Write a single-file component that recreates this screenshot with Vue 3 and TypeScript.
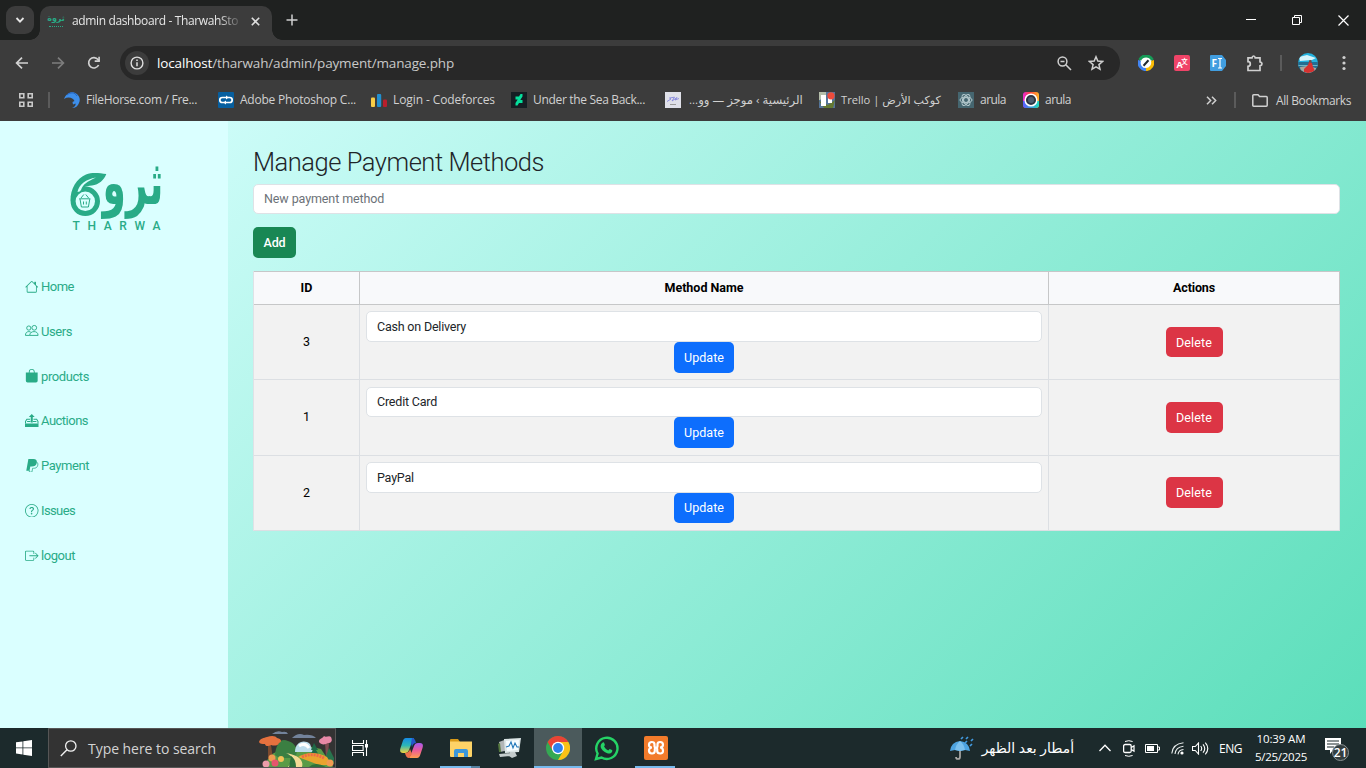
<script setup lang="ts">
import { ref } from 'vue'

interface Bookmark { id: string; label: string; slot: number; text: number; rtl?: boolean; arabic?: boolean }
interface NavItem { id: string; label: string; text: number }
interface Method { id: number; name: string }

const bookmarks: Bookmark[] = [
  { id: 'horse', label: 'FileHorse.com / Fre...', slot: 154, text: 111 },
  { id: 'adobe', label: 'Adobe Photoshop C...', slot: 153, text: 116 },
  { id: 'cf', label: 'Login - Codeforces', slot: 140, text: 102 },
  { id: 'deviant', label: 'Under the Sea Back...', slot: 154, text: 112 },
  { id: 'mail', label: 'الرئيسية › موجز — وو...', slot: 154, text: 114, rtl: true, arabic: true },
  { id: 'trello', label: 'Trello | كوكب الأرض', slot: 139, text: 100, arabic: true },
  { id: 'gpt', label: 'arula', slot: 65, text: 26 },
  { id: 'ring', label: 'arula', slot: 65, text: 26 },
]

const nav: NavItem[] = [
  { id: 'home', label: 'Home', text: 33 },
  { id: 'users', label: 'Users', text: 31 },
  { id: 'bag', label: 'products', text: 48 },
  { id: 'auction', label: 'Auctions', text: 47 },
  { id: 'paypal', label: 'Payment', text: 48 },
  { id: 'question', label: 'Issues', text: 34 },
  { id: 'logout', label: 'logout', text: 34 },
]

const methods = ref<Method[]>([
  { id: 3, name: 'Cash on Delivery' },
  { id: 1, name: 'Credit Card' },
  { id: 2, name: 'PayPal' },
])
const newMethod = ref('')

/* Sets a label to a given width: by tracking, or by type size for joined scripts. */
const vFit = {
  mounted(el: HTMLElement, binding: { value: number; arg?: string }) {
    const width = el.getBoundingClientRect().width
    if (binding.arg === 'size') {
      const size = parseFloat(getComputedStyle(el).fontSize)
      el.style.fontSize = `${(size * binding.value) / width}px`
    } else {
      const count = (el.textContent ?? '').length
      el.style.letterSpacing = `${(binding.value - width) / count}px`
    }
  },
}
</script>

<template>
  <div class="screen">
    <header class="browser">
      <div class="tabs">
        <button class="tab-search"><svg width="10" height="10" viewBox="0 0 10 10"><path d="M1.5 3l3.5 3.6L8.500 3" fill="none" stroke="#e6e6e6" stroke-width="1.8" /></svg></button>
        <div class="tab">
          <span class="fav"><b>ثروة</b><i></i></span>
          <span class="tab-title"><span v-fit="166">admin dashboard - TharwahSto</span></span>
          <svg class="close" width="9" height="9" viewBox="0 0 9 9"><path d="M.8.8l7.400 7.400M8.200.8L.8 8.200" stroke="#dedede" stroke-width="1.6" /></svg>
        </div>
        <svg class="plus" width="12" height="12" viewBox="0 0 12 12"><path d="M6 .5v11M.5 6h11" stroke="#d0d0d0" stroke-width="1.500" /></svg>
        <div class="win">
          <svg width="10" height="10" viewBox="0 0 10 10"><path d="M0 4.500h10" stroke="#fff" /></svg>
          <svg width="10" height="10" viewBox="0 0 10 10"><path d="M.5 2.500h7v7h-7zM2.500 2.500v-2h7v7h-2" fill="none" stroke="#fff" /></svg>
          <svg width="11" height="11" viewBox="0 0 11 11"><path d="M.5.5l10 10M10.500.5l-10 10" stroke="#fff" stroke-width="1.200" /></svg>
        </div>
      </div>

      <div class="toolbar">
        <svg class="t-ico" width="16" height="16" viewBox="0 0 16 16"><path d="M14 8H3M8 2.600L2.600 8 8 13.400" fill="none" stroke="#d2d2d2" stroke-width="1.700" /></svg>
        <svg class="t-ico" width="16" height="16" viewBox="0 0 16 16"><path d="M2 8h11M8 2.600L13.400 8 8 13.400" fill="none" stroke="#7d7d7d" stroke-width="1.700" /></svg>
        <svg class="t-ico" width="16" height="16" viewBox="0 0 16 16"><path d="M12.600 10A5.200 5.200 0 1 1 12 4.600L13.300 6" fill="none" stroke="#d2d2d2" stroke-width="1.700" /><path d="M13.900 1.700v5.200H8.700V5.300h3.600V1.700z" fill="#d2d2d2" /></svg>
        <div class="omni">
          <span class="info"><svg width="14" height="14" viewBox="0 0 14 14"><circle cx="7" cy="7" r="5.900" fill="none" stroke="#dedede" stroke-width="1.400" /><path d="M7 6.200v4M7 3.600v1.500" stroke="#dedede" stroke-width="1.500" /></svg></span>
          <span class="url" v-fit="297"><em>localhost</em>/tharwah/admin/payment/manage.php</span>
          <svg class="lens" width="15" height="15" viewBox="0 0 15 15"><circle cx="5.500" cy="5.500" r="4.400" fill="none" stroke="#cfcfcf" stroke-width="1.500" /><path d="M3.500 5.500h4M8.800 8.800l5.200 5.200" stroke="#cfcfcf" stroke-width="1.600" /></svg>
          <svg width="16" height="16" viewBox="0 0 16 16"><path d="M8 1.800l1.800 4.300 4.700.4-3.600 3.100 1.100 4.600L8 11.800l-4 2.400 1.100-4.600L1.500 6.500l4.700-.4z" fill="none" stroke="#cfcfcf" stroke-width="1.500" /></svg>
        </div>
        <div class="exts">
          <svg width="16" height="16" viewBox="0 0 16 16"><circle cx="8" cy="8" r="6.400" fill="#fff" /><path d="M1.700 5A7 7 0 0 1 14.400 5" fill="none" stroke="#169b57" stroke-width="3" /><path d="M14.400 5.500A7 7 0 0 1 8 14.600" fill="none" stroke="#fbbc05" stroke-width="3" /><path d="M8 14.600A6.700 6.700 0 0 1 1.600 5.500" fill="none" stroke="#4285f4" stroke-width="3" /><path d="M5.500 10.700L10.500 5.300" stroke="#202830" stroke-width="2" /></svg>
          <svg class="e2" width="16" height="16" viewBox="0 0 16 16"><rect width="16" height="16" rx="2" fill="#f04468" /><text x="2.400" y="13" font-size="9" font-weight="700" fill="#fff">A</text><text x="7.300" y="8.500" font-size="6.500" font-weight="700" fill="#fff">文</text></svg>
          <svg class="e2" width="16" height="16" viewBox="0 0 16 16"><path d="M1 0h11l4 5v6l-4 5H1a1 1 0 0 1-1-1V1a1 1 0 0 1 1-1z" fill="#419ee0" /><text x="1.500" y="12" font-size="10" font-weight="700" fill="#fff">F</text><path d="M8 3.500h4M8 13h4M10 3.500V13" stroke="#fff" stroke-width="1.200" /></svg>
          <svg class="e3" width="18" height="17" viewBox="0 0 18 17"><path d="M2 2.800h4q.3-1.800 1.600-1.800t1.600 1.800H14v4q2 .3 2 2t-2 2v4.700H2v-4.200a2.300 2.300 0 0 0 0-4.600z" fill="none" stroke="#d0d0d0" stroke-width="1.700" /></svg>
          <i class="bar e4"></i>
          <svg class="avatar" width="20" height="20" viewBox="0 0 20 20"><defs><clipPath id="av"><circle cx="10" cy="10" r="10" /></clipPath></defs><g clip-path="url(#av)"><path fill="#23b2df" d="M0 0h20v20H0z" /><path d="M1 4l8-2 9 3-4 2-12 1z" fill="#d6f3fb" /><path fill="#246d91" d="M0 9h20v11H0z" /><path d="M0 12h20v1H0z" fill="#6fb4c4" /><path d="M2 14l7-1 9 2v5H3z" fill="#a8a69d" /><path d="M6 16l4-4 1-3 3 1 1 4 2 4-6 3-5-2z" fill="#d63230" /><circle cx="12.300" cy="8.300" r="1.300" fill="#764b42" /></g></svg>
          <svg class="e5" width="4" height="16" viewBox="0 0 4 16" fill="#cfcfcf"><circle cx="2" cy="2.500" r="1.600" /><circle cx="2" cy="8" r="1.600" /><circle cx="2" cy="13.500" r="1.600" /></svg>
        </div>
      </div>

      <div class="marks">
        <svg class="apps" width="14" height="14" viewBox="0 0 14 14"><path d="M.8.8h4v4h-4zM9.200.8h4v4h-4zM.8 9.200h4v4h-4zM9.200 9.200h4v4h-4z" fill="none" stroke="#c9c9c9" stroke-width="1.600" /></svg>
        <i class="bar"></i>
        <div class="mark-list">
          <div v-for="(b, i) in bookmarks" :key="i" class="mark" :style="{ width: b.slot + 'px' }">
            <svg width="16" height="16" viewBox="0 0 16 16">
              <g v-if="b.id === 'horse'"><path d="M0 7C2 2 6-.5 10 .5c5 1.500 7 6.500 5 10.500-1 3-3.500 5-7 5 3-1 4-3 3.500-4.500L9 12.500 8.500 10l2-1C9 5.500 4 4.500 0 7z" fill="#3d8eea" /><path d="M3 3c3-3 8-3 10 1" stroke="#2563bd" fill="none" /></g>
              <g v-else-if="b.id === 'adobe'"><rect width="16" height="16" rx="1" fill="#075f9f" /><path d="M8.500 5.500H4.300Q1.800 5.500 1.800 8t2.500 2.500H6M7.500 10.500h4.200q2.500 0 2.500-2.500t-2.500-2.500H10" fill="none" stroke="#fff" stroke-width="1.700" /><path d="M8 3.500l3 2-3 2zM8 8.500l-3 2 3 2z" fill="#fff" /></g>
              <g v-else-if="b.id === 'cf'"><rect x="0" y="5.500" width="4" height="9.500" rx="1" fill="#f8cc46" /><rect x="6" y="2" width="4.200" height="13" rx="1" fill="#218fd0" /><rect x="12" y="7.500" width="4" height="7.500" rx="1" fill="#b71e2c" /></g>
              <g v-else-if="b.id === 'deviant'"><path fill="#151e24" d="M0 0h16v16H0z" /><path d="M11.500 2v2.500L9.300 8h2.200v3H8l-1.500 2.500H4.500V11l2.200-3.500H4.500v-3H8L9.500 2z" fill="#05df9c" /></g>
              <g v-else-if="b.id === 'mail'"><path fill="#dfe0e9" d="M0 0h16v16H0z" /><path d="M2 9.500l4-2.500-1.500-1 5-.8L7 9l5-3.500L10 8l4-1.500" fill="none" stroke="#8586dc" stroke-width=".9" /><path d="M5 12.500h6" stroke="#999" /></g>
              <g v-else-if="b.id === 'trello'"><path fill="#55749a" d="M0 0h16v16H0z" /><path d="M0 0h7v3L1 8H0z" fill="#b5beaa" /><path d="M0 9l5 7h9l2-8-7 5z" fill="#637832" /><path fill="#fff" d="M2 3h5v11H2zM9 6h4v5H9z" /><circle cx="12" cy="3.800" r="3.600" fill="#ee4b3b" /></g>
              <g v-else-if="b.id === 'gpt'"><path fill="#456670" d="M0 0h16v16H0z" /><g fill="none" stroke="#b7cbcf" stroke-width="1"><ellipse cx="8" cy="8" rx="6" ry="3" /><ellipse cx="8" cy="8" rx="6" ry="3" transform="rotate(60 8 8)" /><ellipse cx="8" cy="8" rx="6" ry="3" transform="rotate(120 8 8)" /><circle cx="8" cy="8" r="2.500" /></g></g>
              <g v-else><defs><linearGradient id="rb" x2="1" y2="0"><stop stop-color="#e927d7" /><stop offset=".45" stop-color="#ff4338" /><stop offset="1" stop-color="#ffb52b" /></linearGradient><linearGradient id="rb2" x2="1" y2="0"><stop stop-color="#5a5cff" /><stop offset="1" stop-color="#20d9bd" /></linearGradient></defs><rect width="16" height="16" rx="3" fill="url(#rb)" /><path d="M0 9h16v4q0 3-3 3H3q-3 0-3-3z" fill="url(#rb2)" /><circle cx="8" cy="8" r="5.800" fill="#2c3442" stroke="#fff" stroke-width="1.500" /><circle cx="8" cy="8" r="3" fill="#4d5d70" /></g>
            </svg>
            <span v-if="b.arabic" v-fit:size="b.text" :dir="b.rtl ? 'rtl' : 'ltr'" :class="{ pad: b.rtl }">{{ b.label }}</span>
            <span v-else v-fit="b.text">{{ b.label }}</span>
          </div>
        </div>
        <svg class="more" width="11" height="9" viewBox="0 0 11 9"><path d="M1 .7l3.700 3.800L1 8.300M6 .7l3.700 3.800L6 8.300" fill="none" stroke="#d0d0d0" stroke-width="1.500" /></svg>
        <i class="bar"></i>
        <svg class="folder" width="16" height="13" viewBox="0 0 16 13"><path d="M.8 11.300V1.700q0-.9.900-.9H6l1.600 1.800h6.700q.9 0 .9.900v7.800q0 .9-.9.9H1.700q-.9 0-.9-.9z" fill="none" stroke="#d0d0d0" stroke-width="1.500" /></svg>
        <span class="all" v-fit="75">All Bookmarks</span>
      </div>
    </header>

    <div class="page">
      <aside class="side">
        <svg class="logo" width="100" height="70" viewBox="0 0 100 70">
          <circle cx="19.300" cy="36.300" r="12.200" fill="none" stroke="#29ab87" stroke-width="5" />
          <path d="M4.600 36C4 24 11 13 20 9.500 27 7 34 8.500 40.300 9 38 15 33 19.500 26 20.500 19 21 15 23 13 27l-5 5z" fill="#29ab87" />
          <path d="M11.500 27C13 19 20 14.500 30 12.500 21 17 17 19 15 25q-1 2-3.500 2z" fill="#daffff" />
          <path d="M13.200 33.800h11.200M14 34l1.400 8h7l1.400-8M15 33l2.800-3.500M22.600 33l-2.800-3.500M17.500 36.500v3M20.300 36.500v3" fill="none" stroke="#29ab87" stroke-width="1" />
          <g transform="translate(0 38.500) scale(1 1.500)"><text class="logo-ar" x="97.500" y="0" textLength="61" lengthAdjust="spacingAndGlyphs">ثرو</text></g>
          <text class="logo-en" x="6.500" y="64.500" textLength="88">THARWA</text>
        </svg>
        <nav>
          <a v-for="n in nav" :key="n.id" class="link">
            <svg width="13.500" height="13.500" viewBox="0 0 16 16" fill="currentColor">
              <path v-if="n.id === 'home'" d="M8.707 1.500a1 1 0 0 0-1.414 0L.646 8.146a.5.5 0 0 0 .708.708L2 8.207V13.500A1.500 1.500 0 0 0 3.500 15h9a1.500 1.500 0 0 0 1.500-1.500V8.207l.646.647a.5.5 0 0 0 .708-.708L13 5.793V2.500a.5.5 0 0 0-.5-.5h-1a.5.5 0 0 0-.5.5v1.293zM13 7.207V13.500a.5.5 0 0 1-.5.5h-9a.5.5 0 0 1-.5-.5V7.207l5-5z" />
              <g v-else-if="n.id === 'users'" fill="none" stroke="currentColor" stroke-width="1.100"><circle cx="4.500" cy="4.800" r="2.500" /><circle cx="11" cy="4.500" r="2.800" /><path d="M5.500 13.500C5.800 10.500 8 9 10.700 9s4.800 1.500 4.800 4.500zM5.500 13.500h-5c0-2.800 1.500-4.500 4-4.500 1 0 1.800.3 2.400.8" /></g>
              <path v-else-if="n.id === 'bag'" d="M8 1a2.500 2.500 0 0 1 2.500 2.500V4h-5v-.5A2.500 2.500 0 0 1 8 1m3.500 3v-.5a3.500 3.500 0 1 0-7 0V4H1v10a2 2 0 0 0 2 2h10a2 2 0 0 0 2-2V4z" />
              <g v-else-if="n.id === 'auction'"><path d="M8 0l3.500 3.500H9.200V10H6.800V3.500H4.500zM0 11.300h16v4.200H0z" /><path d="M6 6.300H2.200L.6 8.800v2.500M10 6.300h3.800l1.600 2.500v2.500M2.500 9h4M9.500 9h4" fill="none" stroke="currentColor" stroke-width="1.200" /></g>
              <g v-else-if="n.id === 'paypal'"><path d="M4 0h6c3 0 4.600 1.700 4 4.500C13.500 8 11 9 8 9H6.300L5.300 14H1.500z" /><path d="M14.200 3.800c1.400 1.200 1.300 3 .6 4.700-.8 1.900-2.500 2.500-4.600 2.500H9l-.8 4.500H5l.4-2" fill="none" stroke="currentColor" stroke-width=".9" /></g>
              <g v-else-if="n.id === 'question'"><path d="M8 15A7 7 0 1 1 8 1a7 7 0 0 1 0 14m0 1A8 8 0 1 0 8 0a8 8 0 0 0 0 16" /><path d="M5.255 5.786a.237.237 0 0 0 .241.247h.825c.138 0 .248-.113.266-.25.09-.656.54-1.134 1.342-1.134.686 0 1.314.343 1.314 1.168 0 .635-.374.927-.965 1.371-.673.489-1.206 1.060-1.168 1.987l.003.217a.25.25 0 0 0 .25.246h.811a.25.25 0 0 0 .25-.25v-.105c0-.718.273-.927 1.010-1.486.609-.463 1.244-.977 1.244-2.056 0-1.511-1.276-2.241-2.673-2.241-1.267 0-2.655.590-2.750 2.286m1.557 5.763c0 .533.425.927 1.010.927.609 0 1.028-.394 1.028-.927 0-.552-.420-.940-1.029-.940-.584 0-1.009.388-1.009.940" /></g>
              <g v-else><path fill-rule="evenodd" d="M10 12.500a.5.5 0 0 1-.5.5h-8a.5.5 0 0 1-.5-.5v-9a.5.5 0 0 1 .5-.5h8a.5.5 0 0 1 .5.5v2a.5.5 0 0 0 1 0v-2A1.500 1.500 0 0 0 9.500 2h-8A1.500 1.500 0 0 0 0 3.500v9A1.500 1.500 0 0 0 1.500 14h8a1.500 1.500 0 0 0 1.500-1.500v-2a.5.5 0 0 0-1 0z" /><path fill-rule="evenodd" d="M15.854 8.354a.5.5 0 0 0 0-.708l-3-3a.5.5 0 0 0-.708.708L14.293 7.500H5.500a.5.5 0 0 0 0 1h8.793l-2.147 2.146a.5.5 0 0 0 .708.708z" /></g>
            </svg>
            <span v-fit="n.text">{{ n.label }}</span>
          </a>
        </nav>
      </aside>

      <main class="main">
        <h1><span v-fit="291">Manage Payment Methods</span></h1>
        <input v-model="newMethod" class="field new" placeholder="New payment method" />
        <button class="btn add"><span v-fit="22">Add</span></button>
        <div class="table">
          <div class="row head">
            <div><span v-fit="12">ID</span></div>
            <div><span v-fit="79">Method Name</span></div>
            <div><span v-fit="42">Actions</span></div>
          </div>
          <div v-for="m in methods" :key="m.id" class="row body">
            <div class="id">{{ m.id }}</div>
            <div class="edit">
              <input v-model="m.name" class="field" />
              <button class="btn update"><span v-fit="40">Update</span></button>
            </div>
            <div class="act"><button class="btn delete"><span v-fit="36">Delete</span></button></div>
          </div>
        </div>
      </main>
    </div>

    <footer class="taskbar">
      <div class="start"><svg width="16" height="16" viewBox="0 0 16 16"><path d="M0 2.300l6.500-.9v6.100H0zM7.300 1.300L16 0v7.500H7.300zM0 8.300h6.500v6.200L0 13.600zM7.300 8.300H16V16l-8.700-1.300z" fill="#fff" /></svg></div>
      <div class="search">
        <svg width="17" height="17" viewBox="0 0 17 17"><circle cx="10.800" cy="6" r="5.200" fill="none" stroke="#f1f1f1" stroke-width="1.300" /><path d="M7 9.800L.8 16" stroke="#f1f1f1" stroke-width="1.400" /></svg>
        <span v-fit="128">Type here to search</span>
        <svg class="scene" width="76" height="38" viewBox="0 0 76 38">
          <path d="M13 5q5-4 10-2 5-1 6 2H12zM33 9q6-6 12-3 8-1 12 3H33z" fill="#73839b" />
          <path d="M6 38c2-10 7-14 14-16l24-6 18 4 12 18z" fill="#5a9b47" />
          <path d="M16 26c1-10 5-18 13-14 8 2 11 10 7 17H20z" fill="#3b7f42" />
          <path d="M36 23c0-10 9-13 15-8l3 8z" fill="#bcdcec" /><path d="M40 17q6-4 10 2" stroke="#fff" stroke-width="3" fill="none" />
          <path d="M9 16h3l2 14H9z" fill="#7c4a2f" /><path d="M0 13c1-4 5-4 8-5 5-2 9-1 10 1 5 1 5 4 2 5-1 3-5 3-8 2-3 2-6 1-6-1-3 0-5 0-6-2z" fill="#e6713e" />
          <path d="M66 14l1 14h2l1-14z" fill="#7c4a50" /><path d="M60 13c0-4 3-3 5-6 2 2 5-1 7 1 2 4 0 6-3 6-3 2-7 2-9-1z" fill="#e889a7" />
          <path d="M55 14l4 7h-2l4 7H50l4-7h-2z" fill="#1f6847" /><path d="M70 19l5 10v6H64z" fill="#28734d" />
          <path d="M29 38c5-7 8-9-2-14 12 2 18 7 16 14z" fill="#f4da96" />
          <path d="M39 28q14-8 29 0l5 8-13 0z" fill="#e9a42f" /><path d="M43 28q10-5 22 1" fill="none" stroke="#ef6848" stroke-width="3" stroke-dasharray="2 1" />
          <path d="M30 38l2-11q5 3 5 11zM50 38q6-6 17 0z" fill="#2f713b" />
          <circle cx="7" cy="35" r="3.500" fill="#ec9ca9" /><circle cx="13" cy="29" r="3.500" fill="#f09a50" /><circle cx="16" cy="34" r="3.500" fill="#e6556e" /><circle cx="22" cy="30" r="3" fill="#f5c057" /><circle cx="71" cy="34" r="3.500" fill="#f09a50" />
        </svg>
      </div>
      <div class="task view"><svg width="17" height="16" viewBox="0 0 17 16"><path d="M.5 0v3.500h11V0M.5 16v-3.500h11V16M.5 5.500h10.600v5H.5zM14.500 0v16" fill="none" stroke="#fff" stroke-width="1.100" /><path d="M13 4h3v3.500h-3z" fill="#fff" /></svg></div>
      <div class="task"><svg width="23" height="22" viewBox="0 0 23 22"><defs><linearGradient id="c1" y2="1" x2="0"><stop stop-color="#168be5" /><stop offset=".5" stop-color="#2db7b6" /><stop offset="1" stop-color="#f3d43e" /></linearGradient><linearGradient id="c2" y2="1" x2="0"><stop stop-color="#a65af2" /><stop offset=".5" stop-color="#ed5d98" /><stop offset="1" stop-color="#ff9d4d" /></linearGradient></defs><path d="M6 1h8l-2 4-3 8q-1 3-4 3H3q-4 0-2.500-5l2-6Q3.500 1 6 1z" fill="url(#c1)" /><path d="M17 21H9l2-4 3-8q1-3 4-3h2q4 0 2.500 5l-2 6Q19.500 21 17 21z" fill="url(#c2)" /><path d="M12 1q3 0 4 5-3 0-4 4l-1-4z" fill="#2557c9" /><path d="M5 16q4 0 5-4l2 5-3 4q-3 0-4-5z" fill="#ee704b" /></svg></div>
      <div class="task open split"><svg width="22" height="19" viewBox="0 0 22 19"><path d="M0 1q0-1 1-1h7l2 3H0z" fill="#d99a18" /><path d="M0 2.500h22V17q0 1-1 1H1q-1 0-1-1z" fill="#fdd367" /><path d="M4 18v-6q0-2 2-2h10q2 0 2 2v6h-4v-4H8v4z" fill="#3b97da" /></svg></div>
      <div class="task"><svg width="24" height="22" viewBox="0 0 24 22"><path d="M1 5l8-3 2 11-9 2z" fill="#b1b6b7" /><path d="M0 7l2-1 1 9H1z" fill="#55783e" /><path d="M6 2l17-1-2 14-14 1z" fill="#dde6e7" /><path d="M8 4l13-1-1 10-11 1z" fill="#f6fcff" /><path d="M8 10l3-1 2-4 2 6 2-5 2 4h2" fill="none" stroke="#2076b9" stroke-width="1.100" /><path d="M12 15h5l2 4-5 2-3-2zM1 17l11-1 1 3-11 1z" fill="#c4cccd" /></svg></div>
      <div class="task open active"><svg width="24" height="24" viewBox="0 0 24 24"><circle cx="12" cy="12" r="12" fill="#35a853" /><path d="M1.600 6A12 12 0 0 1 22.400 6H12z" fill="#ea4335" /><path d="M1.600 6L7 15l5-9z" fill="#ea4335" /><path d="M22.400 6A12 12 0 0 1 12 24l5.200-9L12 6z" fill="#fbc116" /><circle cx="12" cy="12" r="6.200" fill="#fff" /><circle cx="12" cy="12" r="4.900" fill="#2f80ed" /></svg></div>
      <div class="task"><svg width="25" height="25" viewBox="0 0 25 25"><path d="M2 23l1.600-5.500A10.600 10.600 0 1 1 7.500 21.500z" fill="none" stroke="#25d366" stroke-width="2.400" /><path d="M8.800 6.500c1-.5 1.300 0 2 2 .4 1-.8 1.500-.7 2 1 2 2.500 3.200 4.200 3.900.7-.3 1-1.400 1.600-1.300 2.800 1.200 2.500 1.300 2.300 2.400-.5 1.800-2.700 2.500-5 1.700-3.700-1.300-6-4.200-6.500-6-.5-2.200.8-4 2.100-4.700z" fill="#25d366" /></svg></div>
      <div class="task open xampp"><svg width="24" height="24" viewBox="0 0 24 24"><rect width="24" height="24" rx="2" fill="#f27b2b" /><path d="M10.500 8.500q0-2.500-2.700-2.500T5 8.700t3 2.800q-3 .2-3 3T7.800 17.500t3-2.500V13q0-1.300 1.200-1.300t1.200 1.300v2q0 2.500 3 2.500t2.800-3-3-3q3-.2 3-2.800T16.200 6t-2.700 2.500v1.700q0 1.300-1.500 1.300t-1.500-1.300z" fill="none" stroke="#fff" stroke-width="2.200" /></svg></div>
      <div class="tray">
        <svg class="umb" width="24" height="25" viewBox="0 0 24 25"><path d="M10 6v15q0 2-2 2t-2-2" fill="none" stroke="#aaa9a7" stroke-width="1.700" /><path d="M0 15Q1 6 10 5q9 1 10 10l-5-1-5 1-5-1z" fill="#4da3e0" /><path d="M5 14Q6 8 10 5q4 3 5 9l-5 1z" fill="#7bc0ee" /><path d="M13 1l-2 2M18 1l-2 2M23 3l-2 2M17 5l-2 2M22 8l-2 2" stroke="#429be1" stroke-width="1.700" /></svg>
        <span class="weather" dir="rtl" v-fit:size="92.500">أمطار بعد الظهر</span>
        <svg class="up" width="12" height="8" viewBox="0 0 12 8"><path d="M.5 7L6 1.200 11.500 7" fill="none" stroke="#fff" stroke-width="1.300" /></svg>
        <svg class="cam" width="12" height="17" viewBox="0 0 12 17"><path d="M2 1.500q3.800-1.600 7.600 0M2 15.500q3.800 1.600 7.600 0" fill="none" stroke="#fff" /><rect x=".6" y="4.500" width="7.600" height="8" rx="1.500" fill="none" stroke="#fff" stroke-width="1.300" /><path d="M8.200 7.500l2.800-1.600v5.200L8.200 9.500" fill="none" stroke="#fff" stroke-width="1.200" /></svg>
        <svg class="bat" width="15" height="9" viewBox="0 0 15 9"><path d="M.5.500h12v8H.5zM13 3h1.500v3H13" fill="none" stroke="#fff" /><path d="M2 2h7v5H2z" fill="#fff" /></svg>
        <svg class="wifi" width="13" height="13" viewBox="0 0 13 13"><path d="M.8 11.500Q1.500 2 12.500.8M4 12Q4.500 5.200 12.500 4.200M7 12.400Q7.500 8 12.500 7.500" fill="none" stroke="#e9eeee" stroke-width="1.100" /><circle cx="11" cy="11" r="1.600" fill="#fff" /></svg>
        <svg class="vol" width="17" height="13" viewBox="0 0 17 13"><path d="M.5 4.500h2.800L6.500 1v11L3.300 8.500H.5zM8.700 4q2 2.500 0 5M11 2.300q3.500 4.200 0 8.400M13.300.7q5 5.800 0 11.600" fill="none" stroke="#fff" stroke-width="1.100" /></svg>
        <span class="lang" v-fit="23">ENG</span>
        <div class="clock"><span v-fit="49">10:39 AM</span><span v-fit="52">5/25/2025</span></div>
        <svg class="note" width="26" height="25" viewBox="0 0 26 25"><path d="M0 2h16v12H8l-3 4v-4H0z" fill="#fff" /><path d="M2 5h12M2 8h12M2 11h7" stroke="#1b292b" stroke-width="1.100" /><circle cx="15.500" cy="16.500" r="8" fill="#343e40" stroke="#899092" /><text x="15.500" y="20.900" text-anchor="middle" font-size="12" font-weight="600" fill="#fff">21</text></svg>
      </div>
    </footer>
  </div>
</template>

<style>
body { margin: 0; overflow: hidden; }
</style>

<style scoped>
* { box-sizing: border-box; }
.screen { width: 1366px; height: 768px; display: flex; flex-direction: column; overflow: hidden; font-family: "Open Sans", "Noto Sans", "DejaVu Sans", sans-serif; }
svg { display: block; flex: none; }
svg text { font-family: "Open Sans", "Noto Sans CJK SC", sans-serif; }
button { font: inherit; }
span { white-space: nowrap; }
.bar { flex: none; width: 2px; height: 16px; background: #5b5b5b; }

.browser { flex: none; height: 121px; background: #3c3c3c; }
.tabs { display: flex; height: 40px; background: #1f2120; }
.tab-search { flex: none; width: 28px; height: 28px; margin: 6px 12px 0 6px; border: 0; border-radius: 9px; background: #3c3c3c; display: grid; place-items: center; padding: 0; }
.tab { position: relative; width: 232px; height: 34px; margin: 6px 0 0 -6px; padding: 0 11px 4px 8px; background: #3c3c3c; border-radius: 10px 10px 0 0; display: flex; align-items: center; }
.tab::before, .tab::after { content: ""; position: absolute; bottom: 0; width: 10px; height: 10px; }
.tab::before { left: -10px; background: radial-gradient(circle at 0 0, transparent 9.500px, #3c3c3c 10px); }
.tab::after { right: -10px; background: radial-gradient(circle at 100% 0, #1f2120 9.500px, #3c3c3c 10px); }
.fav { width: 16px; height: 16px; margin-right: 8px; display: flex; flex-direction: column; align-items: center; color: #29a985; }
.fav b { font: 700 8px/12px "DejaVu Sans", sans-serif; }
.fav i { width: 14px; border-top: 1px dotted #29a985; margin-top: 1px; }
.tab-title { width: 170px; font-size: 12px; line-height: 16px; color: #e6e6e6; -webkit-mask-image: linear-gradient(90deg, #000 146px, transparent 172px); mask-image: linear-gradient(90deg, #000 146px, transparent 172px); }
.tab-title span { display: inline-block; }
.close { margin-left: 9px; }
.plus { margin: 14px 0 0 14px; }
.win { margin: 15px 17px 0 auto; display: flex; gap: 36px; }

.toolbar { display: flex; align-items: center; height: 46px; padding-left: 14px; }
.t-ico { margin-right: 20px; }
.omni { width: 1000px; height: 34px; margin-left: -2px; padding: 0 16px 0 5px; border-radius: 17px; background: #282828; display: flex; align-items: center; }
.info { width: 24px; height: 24px; border-radius: 12px; background: #3c3c3c; display: grid; place-items: center; margin-right: 8px; }
.url { display: inline-block; font-size: 13.500px; line-height: 20px; color: #c9c9c9; }
.url em { font-style: normal; color: #fff; }
.lens { margin: 0 16px 0 auto; }
.exts { display: flex; align-items: center; flex: 1; padding-left: 18px; }
.e2 { margin-left: 20px; }
.e3 { margin-left: 20px; }
.e4 { margin-left: 16px; }
.avatar { margin-left: 16px; }
.e5 { margin-left: 24px; }

.marks { display: flex; align-items: center; height: 28px; font-size: 12px; color: #d1d1d1; padding: 0 15px 0 19px; }
.apps { margin-right: 15px; }
.mark-list { display: flex; margin-left: 14px; }
.mark { display: flex; align-items: center; gap: 6px; line-height: 18px; }
.mark .pad { margin-left: 2px; }
.more { margin: 0 17px 0 auto; }
.folder { margin: 0 8px 0 16px; }

.page { flex: none; height: 607px; display: flex; }
.side { flex: none; width: 228px; background: #daffff; color: #29ab87; font-family: Roboto, sans-serif; }
.logo { margin: 44px 0 0 66px; overflow: visible; }
.logo-ar { font: 700 41px "DejaVu Sans", sans-serif; fill: #29ab87; direction: rtl; }
.logo-en { font: 500 12px Roboto, sans-serif; fill: #29ab87; }
nav { margin-top: 29px; }
.link { display: flex; align-items: center; height: 44.830px; gap: 2.500px; padding-left: 25px; font-size: 13px; }

.main { flex: 1; padding: 24px 26px 0 25px; background: linear-gradient(135deg, #ccfcf8, #5bdeba); font-family: Roboto, sans-serif; color: #212529; }
h1 { margin: 0; height: 38.670px; font-size: 25.500px; font-weight: 350; line-height: 35px; }
h1 span { display: inline-block; }
.field { display: block; width: 100%; height: 30.660px; border: 1px solid #dee2e6; border-radius: 5px; padding: 0 10px; background: #fff; font: 400 12.500px Roboto, sans-serif; letter-spacing: -.2px; color: #212529; outline: none; }
.new { height: 30.300px; }
.field::placeholder { color: #6c7278; opacity: 1; letter-spacing: -.1px; }
.btn { display: grid; place-items: center; height: 30.660px; padding: 0; border: 0; border-radius: 5px; color: #fff; font-size: 12.500px; }
.add { width: 43px; margin: 13px 0 13.370px; background: #198754; font-weight: 500; }
.table { width: 1087px; font-size: 12.500px; color: #000; border-left: 1px solid #dee2e6; }
.row { display: grid; grid-template-columns: 106px 689px 291px; text-align: center; }
.row > div { border-right: 1px solid #dcdfe3; }
.head { height: 34px; background: #f8f9fb; border: solid #c6c7c8; border-width: 1px 0; font-weight: 700; line-height: 32px; }
.head > div { border-right-color: #c6c7c8; }
.body { height: 75.330px; background: #f2f2f2; border-bottom: 1px solid #dcdfe3; }
.id { line-height: 74.500px; }
.edit { padding: 6.330px 6px 0; }
.update { width: 60px; margin: 0 auto; background: #0d6efd; }
.act { padding-top: 21.800px; }
.delete { width: 57px; margin: 0 auto; background: #dc3545; }

.taskbar { flex: none; height: 40px; display: flex; background: #1c2a2c; color: #fff; }
.start { width: 48px; display: grid; place-items: center; }
.search { width: 288px; height: 40px; border: 1px solid #565656; background: #333; display: flex; align-items: center; padding-left: 11px; color: #d3d3d3; font-size: 14px; }
.search span { margin-left: 11px; }
.scene { margin-left: auto; }
.task { position: relative; width: 49px; display: grid; place-items: center; }
.view { width: 48px; margin-right: 3px; }
.active { width: 48px; background: #4b5a5c; }
.open::after { content: ""; position: absolute; left: 4px; right: 5px; bottom: 0; height: 2px; background: #76b9ed; }
.split::after { background: linear-gradient(90deg, #76b9ed 31px, #55809f 31px); }
.active::after { left: 0; right: 0; }
.tray { flex: 1; display: flex; align-items: center; justify-content: flex-end; padding-right: 15px; font-size: 12px; }
.umb { margin-right: 8px; }
.weather { font-size: 13px; line-height: 20px; }
.up { margin: 0 12px 0 25px; }
.bat { margin: 0 11px 0 10px; }
.vol { margin: 0 10px 0 8px; }
.clock { width: 54px; margin: 0 17px 0 12px; display: flex; flex-direction: column; align-items: center; font-size: 11.500px; line-height: 18px; }
</style>
